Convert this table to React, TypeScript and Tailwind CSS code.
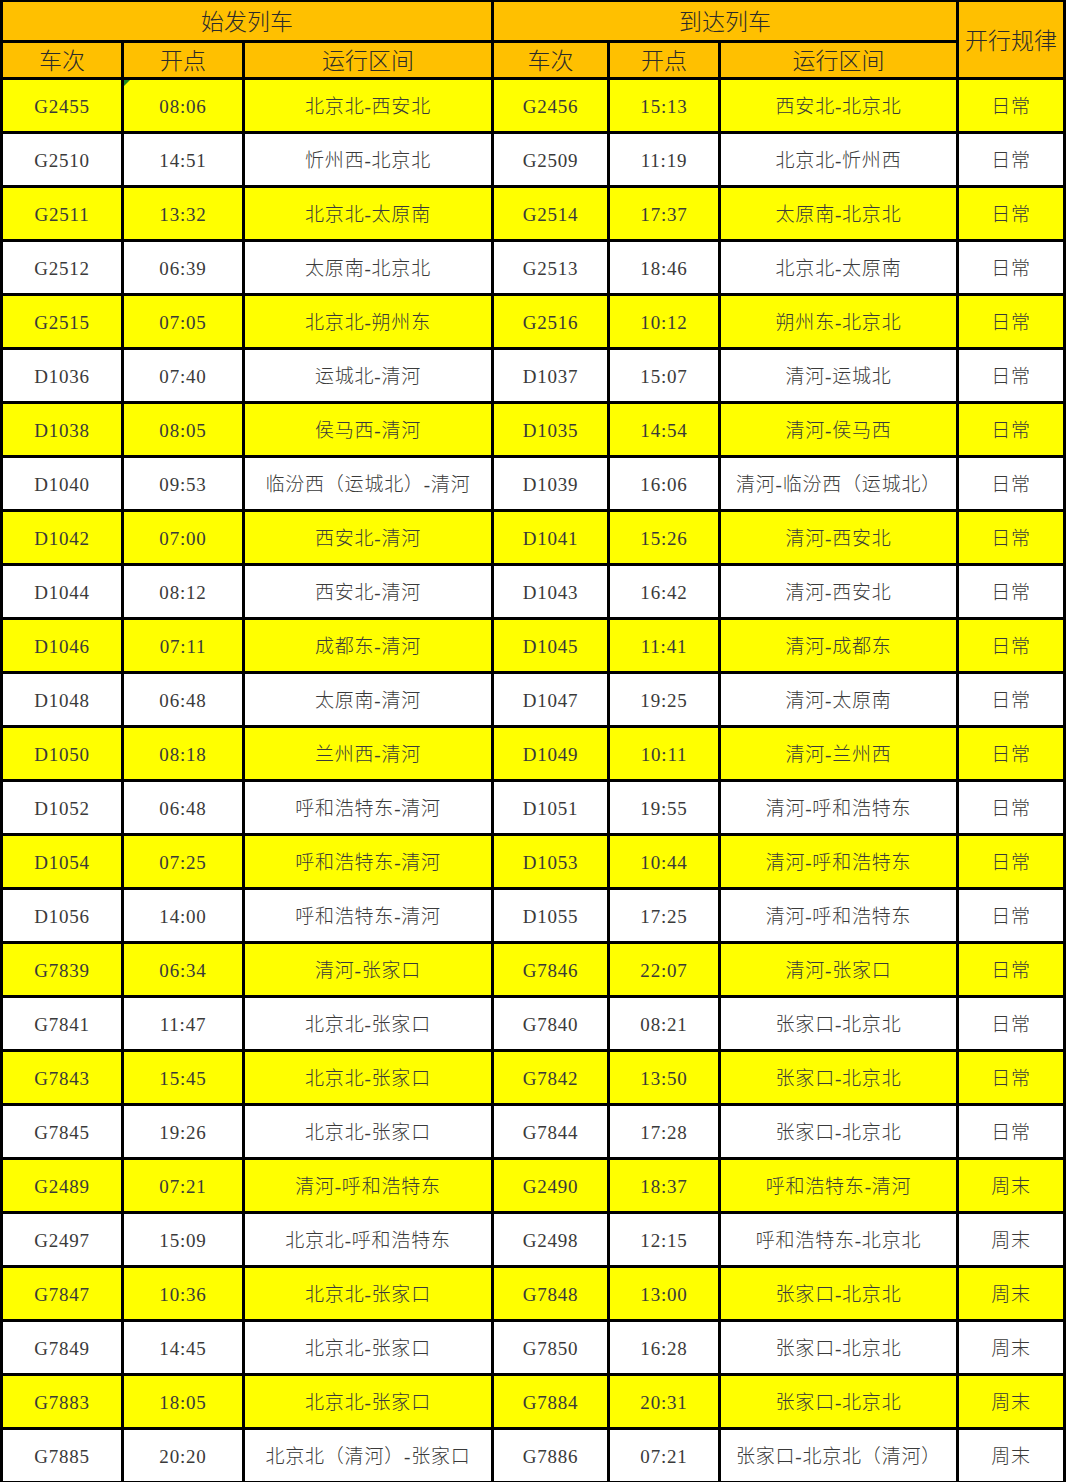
import React from 'react';

type Row = [string, string, string, string, string, string, string];

const rows: Row[] = [
  ['G2455', '08:06', '北京北-西安北', 'G2456', '15:13', '西安北-北京北', '日常'],
  ['G2510', '14:51', '忻州西-北京北', 'G2509', '11:19', '北京北-忻州西', '日常'],
  ['G2511', '13:32', '北京北-太原南', 'G2514', '17:37', '太原南-北京北', '日常'],
  ['G2512', '06:39', '太原南-北京北', 'G2513', '18:46', '北京北-太原南', '日常'],
  ['G2515', '07:05', '北京北-朔州东', 'G2516', '10:12', '朔州东-北京北', '日常'],
  ['D1036', '07:40', '运城北-清河', 'D1037', '15:07', '清河-运城北', '日常'],
  ['D1038', '08:05', '侯马西-清河', 'D1035', '14:54', '清河-侯马西', '日常'],
  ['D1040', '09:53', '临汾西（运城北）-清河', 'D1039', '16:06', '清河-临汾西（运城北）', '日常'],
  ['D1042', '07:00', '西安北-清河', 'D1041', '15:26', '清河-西安北', '日常'],
  ['D1044', '08:12', '西安北-清河', 'D1043', '16:42', '清河-西安北', '日常'],
  ['D1046', '07:11', '成都东-清河', 'D1045', '11:41', '清河-成都东', '日常'],
  ['D1048', '06:48', '太原南-清河', 'D1047', '19:25', '清河-太原南', '日常'],
  ['D1050', '08:18', '兰州西-清河', 'D1049', '10:11', '清河-兰州西', '日常'],
  ['D1052', '06:48', '呼和浩特东-清河', 'D1051', '19:55', '清河-呼和浩特东', '日常'],
  ['D1054', '07:25', '呼和浩特东-清河', 'D1053', '10:44', '清河-呼和浩特东', '日常'],
  ['D1056', '14:00', '呼和浩特东-清河', 'D1055', '17:25', '清河-呼和浩特东', '日常'],
  ['G7839', '06:34', '清河-张家口', 'G7846', '22:07', '清河-张家口', '日常'],
  ['G7841', '11:47', '北京北-张家口', 'G7840', '08:21', '张家口-北京北', '日常'],
  ['G7843', '15:45', '北京北-张家口', 'G7842', '13:50', '张家口-北京北', '日常'],
  ['G7845', '19:26', '北京北-张家口', 'G7844', '17:28', '张家口-北京北', '日常'],
  ['G2489', '07:21', '清河-呼和浩特东', 'G2490', '18:37', '呼和浩特东-清河', '周末'],
  ['G2497', '15:09', '北京北-呼和浩特东', 'G2498', '12:15', '呼和浩特东-北京北', '周末'],
  ['G7847', '10:36', '北京北-张家口', 'G7848', '13:00', '张家口-北京北', '周末'],
  ['G7849', '14:45', '北京北-张家口', 'G7850', '16:28', '张家口-北京北', '周末'],
  ['G7883', '18:05', '北京北-张家口', 'G7884', '20:31', '张家口-北京北', '周末'],
  ['G7885', '20:20', '北京北（清河）-张家口', 'G7886', '07:21', '张家口-北京北（清河）', '周末'],
];

const font = { fontFamily: '"Liberation Serif", "Noto Sans CJK SC", serif' };

const HeadCell: React.FC<{ className?: string; children: React.ReactNode }> = ({ className = '', children }) => (
  <div className={`bg-[#ffc000] flex items-center justify-center pt-[3px] text-[23px] font-light text-[#2b2b2b] leading-none ${className}`}>
    {children}
  </div>
);

export default function App() {
  return (
    <div className="w-[1066px] bg-white" style={font}>
      <div className="grid grid-cols-[118px_118px_246px_113px_108px_235px_104px] grid-rows-[38px_34px] auto-rows-[51px] gap-[3px] bg-black px-[3px] pt-[2px] pb-[1px]">
        <HeadCell className="col-span-3">始发列车</HeadCell>
        <HeadCell className="col-span-3">到达列车</HeadCell>
        <HeadCell className="row-span-2">开行规律</HeadCell>
        <HeadCell>车次</HeadCell>
        <HeadCell>开点</HeadCell>
        <HeadCell>运行区间</HeadCell>
        <HeadCell>车次</HeadCell>
        <HeadCell>开点</HeadCell>
        <HeadCell>运行区间</HeadCell>
        {rows.map((row, i) =>
          row.map((cell, j) => (
            <div
              key={`${i}-${j}`}
              className={`relative flex items-center justify-center pt-[4px] text-[19px] font-light tracking-[0.8px] text-[#3a3a3a] whitespace-nowrap ${
                i % 2 === 0 ? 'bg-[#ffff00]' : 'bg-white'
              }`}
            >
              {i === 0 && j === 1 && (
                <span className="absolute left-0 top-0 w-0 h-0 border-t-[6px] border-r-[6px] border-t-[#1f8a1f] border-r-transparent" />
              )}
              {cell}
            </div>
          ))
        )}
      </div>
    </div>
  );
}
